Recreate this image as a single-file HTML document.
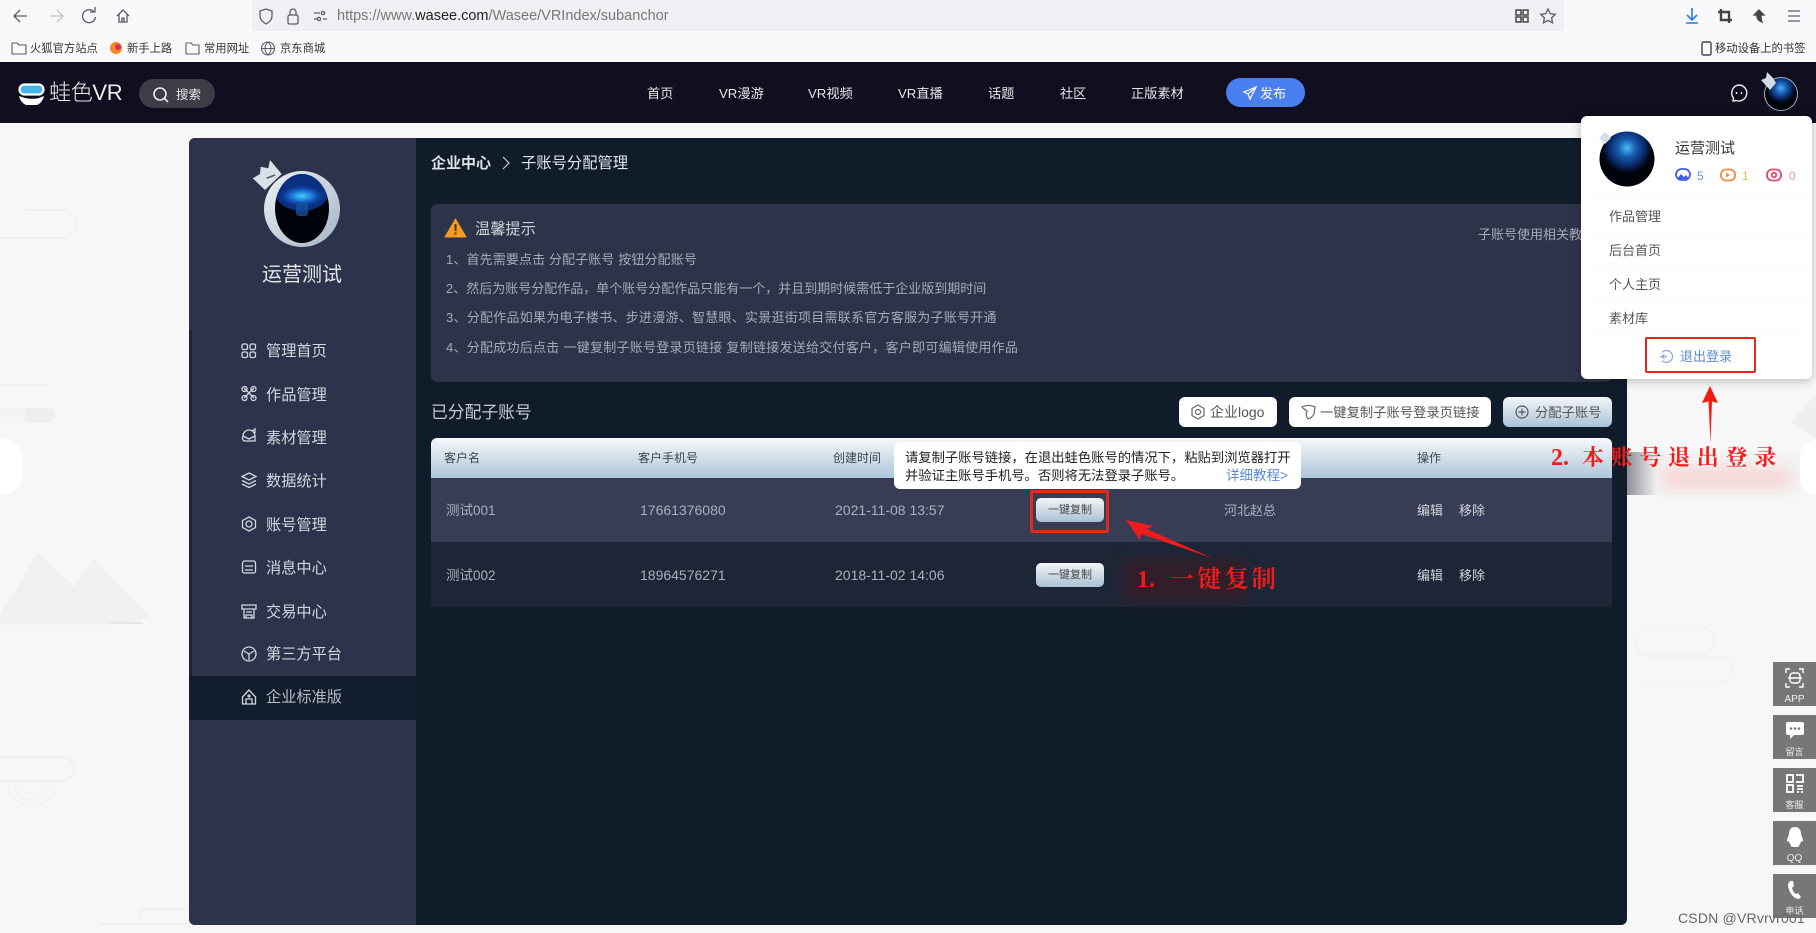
<!DOCTYPE html>
<html lang="zh"><head><meta charset="utf-8"><title>子账号分配管理</title>
<style>
*{box-sizing:border-box}
html,body{margin:0;padding:0;width:1816px;height:933px;overflow:hidden;background:#f6f7f6;font-family:"Liberation Sans","Noto Sans CJK SC",sans-serif}
.a{position:absolute}
.t{position:absolute;white-space:nowrap;line-height:20px;height:20px;transform:translateY(1px)}
svg{position:absolute;overflow:visible}
.nav{color:#e6e6ea;font-size:13.2px}
.m{color:#d4d7de;font-size:15.2px}
.n{color:#a6abb8;font-size:13px}
.h{color:#3a4552;font-size:12px}
.r{color:#aab0bc;font-size:13.5px}
.d{color:#aab0bc;font-size:14px}
.o{color:#d2d5dc;font-size:13px}
.pm{color:#555;font-size:13px;transform:none}
.btn{position:absolute;border-radius:6px;background:#fff;color:#555;font-size:13.3px;line-height:31px;height:30px}
.cp{position:absolute;left:1036px;width:68px;height:24px;border-radius:5px;background:linear-gradient(#f4f6f8,#a9c0d4);color:#444;font-size:11px;line-height:24px;text-align:center}
.side{position:absolute;left:1773px;width:43px;height:44px;background:#777;color:#eee;font-size:9px;text-align:center}
.side span{position:absolute;left:0;right:0;bottom:1px;line-height:11px}
.red{color:#f01c1c;font-family:"Liberation Serif","Noto Serif CJK SC",serif;font-weight:bold;transform:none}
</style></head><body>

<!-- browser chrome -->
<div class="a" style="left:0;top:0;width:1816px;height:62px;background:#f9f9fb"></div>
<div class="a" style="left:252px;top:0;width:1312px;height:31px;background:#f0f0f4"></div>
<svg style="left:0;top:0" width="1816" height="62" fill="none" stroke="#5b5b66" stroke-width="1.3">
<path d="M27 16H15M20 10l-6 6 6 6"/>
<path d="M50 16h12M57 10l6 6-6 6" stroke="#c0c0c8"/>
<path d="M94 12a6.5 6.5 0 1 0 1.5 5M95 7v5h-5"/>
<path d="M117 16l6-6 6 6M119 14v8h8v-8M122 22v-4h2v4"/>
<path d="M266 9l6 2v5c0 4-3 6-6 8-3-2-6-4-6-8v-5z"/>
<rect x="288" y="15" width="10" height="9" rx="1.5"/><path d="M290 15v-3a3 3 0 0 1 6 0v3"/>
<path d="M314 13h6M314 19h3M323 19h4" stroke-width="1.2"/><circle cx="323" cy="13" r="1.6"/><circle cx="319" cy="19" r="1.6"/>
<path d="M1516 10h5v5h-5zM1523 10h5v5h-5zM1516 17h5v5h-5zM1523 17h5v5h-5z" stroke="#444" stroke-width="1.5"/>
<path d="M1548 9l2.200 4.600 5 .7-3.600 3.500.9 5-4.500-2.400-4.500 2.400.9-5-3.600-3.500 5-.7z"/>
<path d="M1692 8v11M1687 15l5 5 5-5M1686 23h12" stroke="#2a7be0" stroke-width="1.6"/>
<path d="M1721 9v11h11M1718 12h11v11" stroke="#444" stroke-width="2.4"/>
<path d="M1759 10l-5 5h3v2c0 2 2 4 5 5-1-2-1-4-1-7h3z" fill="#444" stroke="#444"/>
<path d="M1788 11h12M1788 16h12M1788 21h12" stroke-width="1.2"/>
<path d="M12 43h5l2 2h7v9H12z" stroke-width="1.1"/>
<circle cx="116" cy="48" r="6" fill="#f58a1f" stroke="none"/><circle cx="118" cy="47" r="3" fill="#d92d6a" stroke="none"/>
<path d="M186 43h5l2 2h6v9h-13z" stroke-width="1.1"/>
<circle cx="268" cy="48.500" r="6.500" stroke-width="1.1"/><path d="M261.500 48.500h13M268 42c-4 4-4 9 0 13M268 42c4 4 4 9 0 13" stroke-width="1"/>
<rect x="1702" y="42" width="9" height="13" rx="1.500" stroke="#444" stroke-width="1.4"/>
</svg>
<div class="t" style="left:337px;top:5px;font-size:14.500px;color:#777">https://www.<span style="color:#222">wasee.com</span>/Wasee/VRIndex/subanchor</div>
<div class="t" style="left:30px;top:38px;font-size:11.300px;color:#333">火狐官方站点</div>
<div class="t" style="left:127px;top:38px;font-size:11.300px;color:#333">新手上路</div>
<div class="t" style="left:204px;top:38px;font-size:11.300px;color:#333">常用网址</div>
<div class="t" style="left:280px;top:38px;font-size:11.300px;color:#333">京东商城</div>
<div class="t" style="left:1715px;top:38px;font-size:11.300px;color:#333">移动设备上的书签</div>

<!-- site header -->
<div class="a" style="left:0;top:62px;width:1816px;height:61px;background:#100e1f"></div>
<svg style="left:18px;top:83px" width="28" height="23">
<rect x="1.500" y="1.500" width="24" height="10" rx="5" fill="#45b4e8" stroke="#fff" stroke-width="2.200"/>
<path d="M1 13c1 5 5 9 8 9h9c3 0 7-4 8-9l-5 2c-4 1-9 1-14 0z" fill="#fff"/></svg>
<div class="t" style="left:49px;top:82px;font-size:22px;color:#eee;letter-spacing:-.3px;font-weight:300">蛙色VR</div>
<div class="a" style="left:139px;top:79px;width:76px;height:29px;border-radius:15px;background:#3e3c47"></div>
<svg style="left:152px;top:86px" width="18" height="18" fill="none" stroke="#eee" stroke-width="1.600"><circle cx="8" cy="8" r="6"/><path d="M12.500 12.500l3.500 3.500"/></svg>
<div class="t" style="left:176px;top:84px;font-size:12.500px;color:#e8e8e8">搜索</div>
<div class="t nav" style="left:647px;top:83px">首页</div>
<div class="t nav" style="left:719px;top:83px">VR漫游</div>
<div class="t nav" style="left:808px;top:83px">VR视频</div>
<div class="t nav" style="left:898px;top:83px">VR直播</div>
<div class="t nav" style="left:988px;top:83px">话题</div>
<div class="t nav" style="left:1060px;top:83px">社区</div>
<div class="t nav" style="left:1131px;top:83px">正版素材</div>
<div class="a" style="left:1226px;top:78px;width:79px;height:29px;border-radius:15px;background:#4a7ff0"></div>
<svg style="left:1243px;top:86px" width="14" height="14" fill="none" stroke="#fff" stroke-width="1.200"><path d="M13 1L1 6l4 2 2 5zM13 1L5 8"/></svg>
<div class="t" style="left:1260px;top:83px;font-size:13px;color:#fff">发布</div>
<svg style="left:1730px;top:84px" width="18" height="18" fill="none" stroke="#eee" stroke-width="1.400"><path d="M9 1a8 8 0 1 1-3 15.500L3 17l.5-3A8 8 0 0 1 9 1z"/><path d="M6.500 8v2M11.500 8v2"/></svg>
<svg style="left:1760px;top:70px" width="40" height="42" viewBox="0 0 40 42">
<defs><radialGradient id="g1" cx=".5" cy=".32" r=".62"><stop offset="0" stop-color="#3fb5f0"/><stop offset=".28" stop-color="#1a5bb0"/><stop offset=".55" stop-color="#082058"/><stop offset=".72" stop-color="#02040c"/></radialGradient></defs>
<circle cx="21" cy="24" r="16.500" fill="url(#g1)" stroke="#9fb0c0" stroke-width="1"/><path d="M1 10l5-2 1-6 6 6 3 5-6 7z" fill="#d3dbe2"/></svg>

<!-- background decoration -->
<svg style="left:0;top:123px" width="1816" height="810" fill="none" stroke="#f1f1ed" stroke-width="2">
<path d="M0 115h62a14 14 0 0 0 0-28H25M0 262h50"/>
<rect x="-20" y="285" width="75" height="15" rx="7.500" fill="#eeefed" stroke="none"/>
<rect x="-20" y="285" width="45" height="15" fill="#f4f5f3" stroke="none"/>
<path d="M0 492L38 430l77 72H0z" fill="#f0f0ee" stroke="none"/>
<path d="M74 463L93 435l57 59-35 8z" fill="#f1f1ef" stroke="none"/>
<path d="M110 500h32" stroke="#e6e6e4"/>
<path d="M0 634h62a12 12 0 0 1 0 24H0"/>
<path d="M8 664a24 24 0 0 0 47 0M15 664a17 17 0 0 0 33 0M22 664a10 10 0 0 0 19 0" stroke-width="1.200"/>
<path d="M190 801h-90M190 786h-45a6 6 0 0 0 0 12"/>
<path d="M1640 532h60a14 14 0 0 0 0-28h-50a12 12 0 0 0 0 30h70a12 12 0 0 1 0 26h-80" stroke="#f3f4f0"/>
<path d="M1790 300l26-30v45z" fill="#efefed" stroke="none"/>
</svg>
<div class="a" style="left:0;top:438px;width:23px;height:57px;background:#fff;border-radius:0 29px 29px 0"></div>
<div class="a" style="left:1800px;top:440px;width:16px;height:55px;background:#fff;border-radius:28px 0 0 28px"></div>

<!-- band under annotation -->
<div class="a" style="left:1627px;top:452px;width:173px;height:43px;background:#f3f3f2"></div>
<div class="a" style="left:1627px;top:452px;width:30px;height:43px;background:linear-gradient(90deg,#8d9098,#f3f3f2)"></div>
<div class="a" style="left:1662px;top:468px;width:128px;height:20px;background:#f6d6d6;filter:blur(7px)"></div>

<!-- main panel -->
<div class="a" style="left:189px;top:138px;width:1438px;height:787px;background:#111c2b;border-radius:6px"></div>
<div class="a" style="left:189px;top:138px;width:227px;height:787px;background:#2c334a;border-radius:6px 0 0 6px"></div>
<div class="a" style="left:189px;top:330px;width:3px;height:346px;background:#1d2437"></div>
<div class="a" style="left:189px;top:676px;width:227px;height:44px;background:#121d2d"></div>

<svg style="left:250px;top:158px" width="95" height="92" viewBox="0 0 95 92">
<defs>
<linearGradient id="g2" x1="0" y1="0" x2="1" y2="1"><stop offset="0" stop-color="#eef2f5"/><stop offset="1" stop-color="#a3b5c4"/></linearGradient>
<radialGradient id="g5" cx=".5" cy=".5" r=".5"><stop offset="0" stop-color="#3fd0f5"/><stop offset=".5" stop-color="#1a6ad0"/><stop offset="1" stop-color="#0a3a90" stop-opacity="0"/></radialGradient>
<clipPath id="c1"><ellipse cx="52" cy="50.500" rx="27" ry="34.500"/></clipPath>
</defs>
<path d="M2.700 20.300L10 16l.7-7.300 7.600 1.600L20 2l11.700 14L15 32z" fill="#d9e0e6"/>
<path d="M16.700 20.300L25 17" stroke="#556" stroke-width="1.600"/>
<circle cx="52" cy="51" r="38" fill="url(#g2)"/>
<ellipse cx="52" cy="50.500" rx="27" ry="34.500" fill="#01030c"/>
<g clip-path="url(#c1)">
<ellipse cx="52" cy="34" rx="27" ry="19" fill="#0b2f82"/>
<ellipse cx="52" cy="38" rx="24" ry="11" fill="url(#g5)"/>
<rect x="46" y="44" width="12" height="14" rx="3" fill="#14569f" opacity=".75"/>
</g>
</svg>
<div class="t" style="left:262px;top:263px;font-size:20px;color:#e4e6ea;line-height:22px;height:22px">运营测试</div>

<svg style="left:241px;top:342px" width="16" height="370" fill="none" stroke="#d4d7de" stroke-width="1.300">
<rect x="1" y="2" width="5.500" height="5.500" rx="1.500"/><rect x="9" y="2" width="5.500" height="5.500" rx="1.500"/><rect x="1" y="10" width="5.500" height="5.500" rx="1.500"/><rect x="9" y="10" width="5.500" height="5.500" rx="1.500"/>
<path d="M3 46l10 10M13 46L3 56"/><circle cx="3.500" cy="47" r="2.500"/><circle cx="12.500" cy="47" r="2.500"/><circle cx="3.500" cy="56" r="2.500"/><circle cx="12.500" cy="56" r="2.500"/>
<path d="M2 94a6 6 0 0 1 12 0v5H4a2.500 2.500 0 0 1-2.500-2.500zM2 94l6 3 6-3M11 89l3-2v4"/>
<path d="M8 131l7 3.500-7 3.500-7-3.500zM1 138.500l7 3.500 7-3.500M1 142l7 3.500 7-3.500"/>
<path d="M8 175l6.500 3.500v7L8 189l-6.500-3.500v-7z"/><circle cx="8" cy="182" r="3"/>
<rect x="1.500" y="219" width="13" height="12" rx="2"/><path d="M4 224h8M4 228h8"/>
<path d="M1 263h14v4H1zM3 267v9h10v-9M5 276v-3h6v3M5 270h6"/>
<circle cx="8" cy="312" r="7"/><path d="M3 309l5 3 5-3M8 312v6"/>
<path d="M1.500 355L8 348l6.500 7v7h-13zM5 362v-5h6v5"/><circle cx="8" cy="354" r="1"/>
</svg>
<div class="t m" style="left:266px;top:341px">管理首页</div>
<div class="t m" style="left:266px;top:385px">作品管理</div>
<div class="t m" style="left:266px;top:428px">素材管理</div>
<div class="t m" style="left:266px;top:471px">数据统计</div>
<div class="t m" style="left:266px;top:515px">账号管理</div>
<div class="t m" style="left:266px;top:558px">消息中心</div>
<div class="t m" style="left:266px;top:602px">交易中心</div>
<div class="t m" style="left:266px;top:644px">第三方平台</div>
<div class="t m" style="left:266px;top:687px;color:#b6bbc6">企业标准版</div>

<!-- breadcrumb -->
<div class="t" style="left:431px;top:153px;font-size:15px;color:#dfe2e6;font-weight:bold">企业中心</div>
<svg style="left:501px;top:155px" width="10" height="16" fill="none" stroke="#c8ccd4" stroke-width="1.200"><path d="M2 2l6 6-6 6"/></svg>
<div class="t" style="left:521px;top:153px;font-size:15.300px;color:#e2e5e9">子账号分配管理</div>

<!-- notice -->
<div class="a" style="left:431px;top:204px;width:1181px;height:178px;background:#2d3349;border-radius:6px"></div>
<svg style="left:445px;top:218px" width="22" height="20"><path d="M10.500 1L21 19H0z" fill="#f59a23" stroke="#f59a23" stroke-linejoin="round"/><rect x="9.500" y="6" width="2" height="7" fill="#4a3510"/><rect x="9.500" y="14.500" width="2" height="2" fill="#4a3510"/></svg>
<div class="t" style="left:475px;top:219px;font-size:15.200px;color:#cfd3da">温馨提示</div>
<div class="t n" style="left:446px;top:249px;letter-spacing:.12px">1、首先需要点击 分配子账号 按钮分配账号</div>
<div class="t n" style="left:446px;top:278px">2、然后为账号分配作品，单个账号分配作品只能有一个，并且到期时候需低于企业版到期时间</div>
<div class="t n" style="left:446px;top:307px;letter-spacing:.25px">3、分配作品如果为电子楼书、步进漫游、智慧眼、实景逛街项目需联系官方客服为子账号开通</div>
<div class="t n" style="left:446px;top:337px;letter-spacing:.26px">4、分配成功后点击 一键复制子账号登录页链接 复制链接发送给交付客户，客户即可编辑使用作品</div>
<div class="t n" style="left:1478px;top:224px">子账号使用相关教程</div>

<!-- table toolbar -->
<div class="t" style="left:431px;top:402px;font-size:16.800px;color:#c6cad2">已分配子账号</div>
<div class="btn" style="left:1179px;top:397px;width:98px;padding-left:31px;font-size:14px">企业logo</div>
<svg style="left:1191px;top:404px" width="15" height="16" fill="none" stroke="#666" stroke-width="1.200"><path d="M7 1l6 3.500v7L7 15l-6-3.500v-7z"/><circle cx="7" cy="8" r="2.500"/></svg>
<div class="btn" style="left:1289px;top:397px;width:202px;padding-left:31px">一键复制子账号登录页链接</div>
<svg style="left:1301px;top:404px" width="15" height="16" fill="none" stroke="#666" stroke-width="1.200"><path d="M1 3c4-2 9-2 13 0l-1 7c-1 2-3 4-6 5-2-2-2-5-1-8-2-2-4-2-5-4z"/></svg>
<div class="btn" style="left:1503px;top:397px;width:109px;padding-left:32px;background:linear-gradient(#f3f6f9,#a9c2d8)">分配子账号</div>
<svg style="left:1515px;top:405px" width="14" height="14" fill="none" stroke="#555" stroke-width="1.200"><circle cx="7" cy="7" r="6"/><path d="M7 3.500v7M3.500 7h7"/></svg>

<!-- table -->
<div class="a" style="left:431px;top:438px;width:1181px;height:40px;border-radius:6px 6px 0 0;background:linear-gradient(#f5f8fa,#aec6db)"></div>
<div class="a" style="left:431px;top:478px;width:1181px;height:64px;background:#383d55"></div>
<div class="a" style="left:431px;top:542px;width:1181px;height:65px;background:#1c2636"></div>
<div class="t h" style="left:444px;top:447px">客户名</div>
<div class="t h" style="left:638px;top:447px">客户手机号</div>
<div class="t h" style="left:833px;top:447px">创建时间</div>
<div class="t h" style="left:1417px;top:447px">操作</div>

<div class="t r" style="left:446px;top:500px">测试001</div>
<div class="t d" style="left:640px;top:499px">17661376080</div>
<div class="t d" style="left:835px;top:499px">2021-11-08 13:57</div>
<div class="cp" style="top:498px">一键复制</div>
<div class="t r" style="left:1224px;top:500px;font-size:13px">河北赵总</div>
<div class="t o" style="left:1417px;top:500px">编辑</div>
<div class="t o" style="left:1459px;top:500px">移除</div>

<div class="t r" style="left:446px;top:565px">测试002</div>
<div class="t d" style="left:640px;top:564px">18964576271</div>
<div class="t d" style="left:835px;top:564px">2018-11-02 14:06</div>
<div class="cp" style="top:563px">一键复制</div>
<div class="t o" style="left:1417px;top:565px">编辑</div>
<div class="t o" style="left:1459px;top:565px">移除</div>

<!-- tooltip -->
<div class="a" style="left:894px;top:442px;width:407px;height:47px;background:#fff;border-radius:6px"></div>
<div class="t" style="left:905px;top:447px;font-size:13.300px;color:#222">请复制子账号链接，在退出蛙色账号的情况下，粘贴到浏览器打开</div>
<div class="t" style="left:905px;top:465px;font-size:13.300px;color:#222">并验证主账号手机号。否则将无法登录子账号。</div>
<div class="t" style="left:1226px;top:465px;font-size:13.500px;color:#5b8bd8">详细教程&gt;</div>

<!-- annotation 1 -->
<div class="a" style="left:1030px;top:490px;width:79px;height:43px;border:3px solid #e02a20;border-radius:2px"></div>
<div class="a" style="left:1122px;top:558px;width:125px;height:44px;background:#3a1c24;filter:blur(6px);opacity:.7"></div>
<svg style="left:1120px;top:515px" width="100" height="50"><path d="M6 5L20 25 21 19 92 43 27 14 33 11z" fill="#ee1c1c"/></svg>
<div class="t red" style="left:1137px;top:565px;height:30px;line-height:30px;font-size:24px">1.</div>
<div class="t red" style="left:1170px;top:565px;height:30px;line-height:30px;font-size:24px;letter-spacing:3.300px">一键复制</div>

<!-- popup -->
<div class="a" style="left:1581px;top:116px;width:231px;height:263px;background:#fff;border-radius:6px;box-shadow:0 2px 10px rgba(0,0,0,.25)"></div>
<svg style="left:1595px;top:126px" width="62" height="62" viewBox="0 0 62 62">
<defs><radialGradient id="g4" cx=".5" cy=".3" r=".65"><stop offset="0" stop-color="#49c0f2"/><stop offset=".25" stop-color="#1a5bb0"/><stop offset=".5" stop-color="#0a2a6a"/><stop offset=".7" stop-color="#01030a"/></radialGradient></defs>
<circle cx="32" cy="33" r="27.500" fill="url(#g4)"/><path d="M4 12l6-6 6 6-6 6z" fill="#d6e0e8"/></svg>
<div class="t" style="left:1675px;top:138px;font-size:15px;color:#333">运营测试</div>
<svg style="left:1675px;top:167px" width="115" height="16" fill="none" stroke-width="1.800">
<rect x="1" y="2" width="14" height="11" rx="5.500" stroke="#3d5ee8"/><path d="M2 12l4-5 3 3 2-2 3 4z" fill="#3d5ee8" stroke="none"/>
<rect x="46" y="2.500" width="14" height="11" rx="5" stroke="#ee8a4a"/><path d="M51 5.500l4 2.500-4 2.500z" fill="#ee8a4a" stroke="none"/>
<rect x="92" y="2.500" width="14" height="11" rx="5" stroke="#e8466a"/><circle cx="99" cy="8" r="2.200" stroke="#e8466a"/>
</svg>
<div class="t" style="left:1697px;top:165px;font-size:12px;color:#6f94d8">5</div>
<div class="t" style="left:1742px;top:165px;font-size:12px;color:#edb84e">1</div>
<div class="t" style="left:1789px;top:165px;font-size:12px;color:#ef98a8">0</div>
<div class="a" style="left:1589px;top:198px;width:215px;height:1px;background:#f8f8f8"></div>
<div class="a" style="left:1589px;top:233px;width:215px;height:1px;background:#f8f8f8"></div>
<div class="a" style="left:1589px;top:267px;width:215px;height:1px;background:#f8f8f8"></div>
<div class="a" style="left:1589px;top:301px;width:215px;height:1px;background:#f8f8f8"></div>
<div class="a" style="left:1589px;top:335px;width:215px;height:1px;background:#f8f8f8"></div>
<div class="t pm" style="left:1609px;top:207px">作品管理</div>
<div class="t pm" style="left:1609px;top:241px">后台首页</div>
<div class="t pm" style="left:1609px;top:275px">个人主页</div>
<div class="t pm" style="left:1609px;top:309px">素材库</div>
<svg style="left:1659px;top:349px" width="15" height="15" fill="none" stroke="#8aa8df" stroke-width="1.200"><path d="M3 3.500A6 6 0 1 1 3 11.500M1 7.500h7M5.500 5l-2.500 2.500 2.500 2.500"/></svg>
<div class="t" style="left:1680px;top:346px;font-size:13px;color:#5b8bd8">退出登录</div>
<div class="a" style="left:1645px;top:337px;width:111px;height:36px;border:2.500px solid #e8261c;border-radius:2px"></div>

<!-- annotation 2 -->
<svg style="left:1700px;top:385px" width="20" height="60"><path d="M10 1L18 18 12 16.500 10.500 58 8.500 16.500 2 18z" fill="#f21c14"/></svg>
<div class="t red" style="left:1551px;top:442px;height:32px;line-height:32px;font-size:24px">2.</div>
<div class="t red" style="left:1582px;top:442px;height:32px;line-height:32px;font-size:22px;letter-spacing:6.700px">本账号退出登录</div>

<!-- right floats -->
<div class="side" style="top:662px"><svg style="left:12px;top:5px" width="20" height="22" fill="none" stroke="#fff" stroke-width="1.400"><path d="M1 6V2h4M14 2h4v4M1 16v4h4M14 20h4v-4M3 11h14"/><rect x="5" y="6" width="10" height="10" rx="3"/></svg><span style="font-size:10px">APP</span></div>
<div class="side" style="top:715px"><svg style="left:12px;top:6px" width="20" height="20"><path d="M3 1h14a2 2 0 0 1 2 2v9a2 2 0 0 1-2 2H9l-4 4v-4H3a2 2 0 0 1-2-2V3a2 2 0 0 1 2-2z" fill="#fff"/><circle cx="6" cy="7.500" r="1.300" fill="#777"/><circle cx="10" cy="7.500" r="1.300" fill="#777"/><circle cx="14" cy="7.500" r="1.300" fill="#777"/></svg><span>留言</span></div>
<div class="side" style="top:768px"><svg style="left:13px;top:6px" width="18" height="20" fill="none" stroke="#fff" stroke-width="1.800"><rect x="1" y="1" width="6" height="7"/><rect x="1" y="11" width="6" height="7"/><path d="M10 1h7v7h-7M11 12h6M11 15h6M11 18h2M15 18h2"/></svg><span>客服</span></div>
<div class="side" style="top:821px"><svg style="left:13px;top:5px" width="18" height="22"><path d="M9 1c4 0 6 3 6 7l2 6c0 2-1 2-2 1 0 2-1 3-2 4 1 1 0 2-4 2s-5-1-4-2c-1-1-2-2-2-4-1 1-2 1-2-1l2-6c0-4 2-7 6-7z" fill="#fff"/></svg><span style="font-size:10px">QQ</span></div>
<div class="side" style="top:874px"><svg style="left:14px;top:6px" width="16" height="20"><path d="M3 1l3 0 1 5-2 2c1 3 2 5 4 6l2-1 3 4-2 2c-6 0-11-8-11-15z" fill="#fff"/></svg><span>电话</span></div>
<div class="t" style="left:1678px;top:908px;font-size:14px;color:#666;letter-spacing:.2px;transform:none">CSDN @VRvrvr001</div>

</body></html>
